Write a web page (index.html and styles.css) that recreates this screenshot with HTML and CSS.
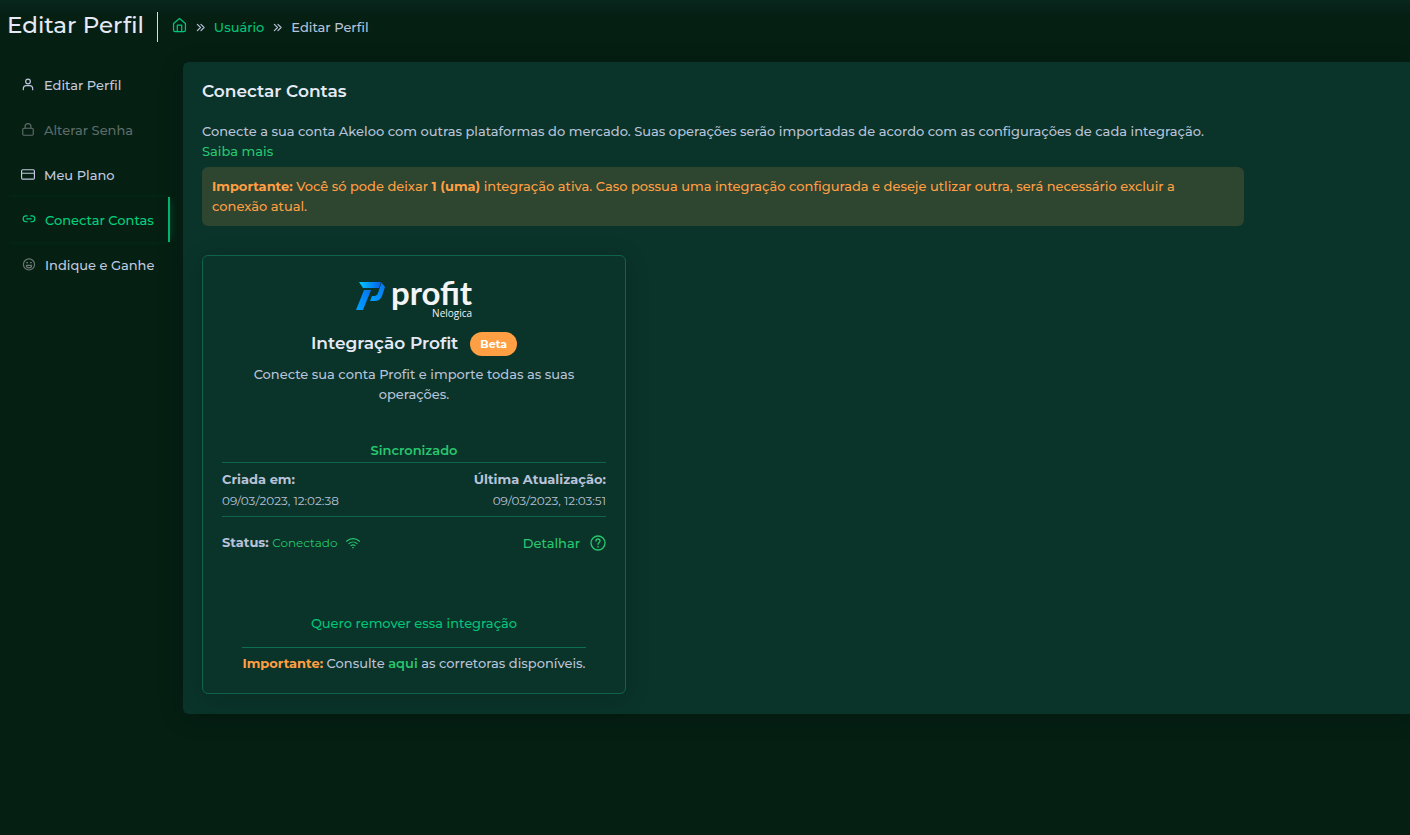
FILE: index.html
```html
<!DOCTYPE html>
<html lang="pt-BR">
<head>
    <meta charset="UTF-8">
    <meta name="viewport" content="width=device-width, initial-scale=1.0">
    <title>Editar Perfil</title>
    <link rel="stylesheet" href="styles.css">
</head>
<body>

<header class="page-header">
    <h1>Editar Perfil</h1>
    <nav class="breadcrumb">
        <a href="#" aria-label="Home">
            <svg class="icon-home" viewBox="0 0 24 24"><path d="M2.5 9.5 12 1.5l9.500 8V20a2.500 2.500 0 0 1-2.500 2.500H5A2.500 2.500 0 0 1 2.500 20z"/><path d="M8.500 22.500V12h7v10.500"/></svg>
        </a>
        <svg class="icon-sep" viewBox="0 0 10 10"><path d="M1.500 1.500 5 5 1.500 8.500M5.500 1.500 9 5 5.500 8.500"/></svg>
        <a href="#">Usuário</a>
        <svg class="icon-sep" viewBox="0 0 10 10"><path d="M1.500 1.500 5 5 1.500 8.500M5.500 1.500 9 5 5.500 8.500"/></svg>
        <span>Editar Perfil</span>
    </nav>
</header>

<div class="layout">
    <nav class="menu">
        <a href="#" class="menu-item">
            <svg viewBox="0 0 24 24"><circle cx="12" cy="6" r="4"/><path d="M4 20v-2a5 5 0 0 1 5-5h6a5 5 0 0 1 5 5v2"/></svg>
            Editar Perfil
        </a>
        <a href="#" class="menu-item disabled">
            <svg viewBox="0 0 24 24"><rect x="3" y="9" width="18" height="12" rx="2"/><path d="M7 9V6a5 5 0 0 1 10 0v3"/></svg>
            Alterar Senha
        </a>
        <a href="#" class="menu-item">
            <svg viewBox="0 0 24 24"><rect x="1" y="3" width="22" height="16" rx="2"/><path d="M1 9h22"/></svg>
            Meu Plano
        </a>
        <a href="#" class="menu-item active">
            <svg viewBox="0 0 24 24"><path d="M9 15H7A5 5 0 0 1 7 5h2M15 5h2a5 5 0 0 1 0 10h-2M8 10h8"/></svg>
            Conectar Contas
        </a>
        <a href="#" class="menu-item wide">
            <svg class="icon-smile" viewBox="0 0 24 24"><circle cx="12" cy="11" r="9.500"/><path d="M7.500 12.500h9a4.500 4.500 0 0 1-9 0zM8 8h1.500M14.500 8H16"/></svg>
            Indique e Ganhe
        </a>
    </nav>

    <main class="panel">
        <h2>Conectar Contas</h2>
        <div class="content">
            <p class="intro">Conecte a sua conta Akeloo com outras plataformas do mercado. Suas operações serão importadas de acordo com as configurações de cada integração.<br><a href="#">Saiba mais</a></p>
            <div class="alert"><b>Importante:</b> Você só pode deixar <b>1 (uma)</b> integração ativa. Caso possua uma integração configurada e deseje utlizar outra, será necessário excluir a conexão atual.</div>

            <section class="card">
                <div class="logo">
                    <svg class="logo-mark" viewBox="0 0 30 30">
                        <defs>
                            <linearGradient id="top" x1="0" y1="0" x2="1" y2="0">
                                <stop offset="0" stop-color="#00c8ff"/>
                                <stop offset="1" stop-color="#075fe8"/>
                            </linearGradient>
                            <linearGradient id="stem" x1="1" y1="0" x2="0" y2="1">
                                <stop offset="0" stop-color="#0873ee"/>
                                <stop offset="1" stop-color="#00a2ff"/>
                            </linearGradient>
                        </defs>
                        <path fill="url(#top)" d="M3 1h22l-2 6H7z"/>
                        <path fill="url(#stem)" d="M25.500 1.500 29 6l-3 9q-2 5-7 5h-5l2-5h3q2 0 3-3z"/>
                        <path fill="url(#stem)" d="M8 9h7L7 29H0z"/>
                    </svg>
                    <div class="logo-text">
                        <span class="logo-name">profit</span>
                        <span class="logo-brand">Nelogica</span>
                    </div>
                </div>
                <div class="card-title">
                    <h3>Integração Profit</h3>
                    <span class="badge">Beta</span>
                </div>
                <p class="description">Conecte sua conta Profit e importe todas as suas operações.</p>

                <div class="sync">Sincronizado</div>
                <div class="dates">
                    <div>
                        <b>Criada em:</b>
                        <small>09/03/2023, 12:02:38</small>
                    </div>
                    <div class="right">
                        <b>Última Atualização:</b>
                        <small>09/03/2023, 12:03:51</small>
                    </div>
                </div>
                <div class="status">
                    <div><b>Status:</b> <small>Conectado</small></div>
                    <svg class="icon-wifi" viewBox="0 0 24 24"><path d="M1 9a16 16 0 0 1 22 0M5 13a10.500 10.500 0 0 1 14 0M8.500 16.500a6 6 0 0 1 7 0M11.500 20h1"/></svg>
                    <a href="#" class="detail">Detalhar
                        <svg class="icon-help" viewBox="0 0 24 24"><circle cx="12" cy="12" r="10.500"/><path d="M9 9a3 3 0 0 1 6 0c0 2-3 2.500-3 5M12 17v1"/></svg>
                    </a>
                </div>

                <button type="button" class="remove">Quero remover essa integração</button>
                <div class="note"><b>Importante:</b> Consulte <a href="#">aqui</a> as corretoras disponíveis.</div>
            </section>
        </div>
    </main>
</div>

</body>
</html>
```
FILE: styles.css
```css
* {
    box-sizing: border-box;
}
body {
    margin: 0;
    min-height: 100vh;
    background: linear-gradient(#09271e, #051f13 16px) no-repeat #051f13;
    color: #b8c2d8;
    font-family: Montserrat, Inter, "Open Sans", sans-serif;
    font-size: 13px;
    font-weight: 500;
    line-height: 20px;
    overflow-x: hidden;
}
h1, h2, h3, p {
    margin: 0;
    font-weight: 500;
    color: #e6eaf6;
}
a {
    color: #28c76f;
    text-decoration: none;
}
b {
    font-weight: 700;
}
small {
    font-size: 12px;
    font-weight: 400;
}
svg {
    flex: none;
    fill: none;
    stroke: currentColor;
    stroke-width: 2;
    stroke-linecap: round;
    stroke-linejoin: round;
}

/* header */
.page-header {
    display: flex;
    align-items: center;
    height: 62px;
    padding: 0 7px 8px;
}
.page-header h1 {
    padding-right: 13px;
    font-size: 23px;
    line-height: 30px;
    padding-bottom: 4px;
}
.breadcrumb {
    display: flex;
    align-items: center;
    gap: 9px;
    height: 30px;
    padding-left: 14px;
    border-left: 1px solid #d6dce8;
}
.breadcrumb a {
    color: #00c57a;
}
.icon-home {
    display: block;
    width: 15px;
    height: 16px;
    margin-bottom: 4px;
}
.icon-sep {
    width: 9px;
    height: 9px;
    stroke-width: 1.3;
}

/* menu */
.layout {
    display: flex;
    align-items: flex-start;
    gap: 13px;
}
.menu {
    flex: none;
    width: 170px;
}
.menu-item {
    display: flex;
    align-items: center;
    gap: 9px;
    height: 45px;
    padding-left: 21px;
    color: #c0c9df;
    font-weight: 500;
}
.menu-item svg {
    width: 14px;
    height: 14px;
}
.menu-item.disabled {
    color: #5c6c69;
}
.menu-item.active, .menu-item.wide {
    padding-left: 22px;
}
.menu-item.active {
    color: #00d17f;
    border-right: 2px solid #00b872;
    box-shadow: 4px 0 8px -4px rgba(0, 184, 114, 0.3);
}
.menu-item .icon-smile {
    color: #6b7772;
}

/* panel */
.panel {
    flex: 1;
    min-width: 0;
    padding: 19px 19px 20px;
    background: #0a3329;
    border-radius: 6px 0 0 6px;
    box-shadow: 0 4px 24px rgba(0, 0, 0, 0.2);
}
.panel h2 {
    font-size: 17px;
    font-weight: 600;
    margin-bottom: 20px;
}
.content {
    max-width: 1042px;
}
.intro {
    color: inherit;
    margin-bottom: 6px;
}
.alert {
    padding: 9px 40px 10px 10px;
    background: #2e4530;
    border-radius: 6px;
    color: #ff9f43;
}

/* card */
.card {
    display: flex;
    flex-direction: column;
    max-width: 424px;
    margin-top: 29px;
    padding: 24px 19px 20px;
    border: 1px solid #0e634a;
    border-radius: 6px;
    box-shadow: 0 4px 24px rgba(0, 0, 0, 0.15);
}
.logo {
    display: flex;
    justify-content: center;
    gap: 5px;
    height: 42px;
}
.logo-mark {
    width: 30px;
    height: 30px;
    margin-top: 1px;
    stroke: none;
}
.logo-text {
    display: flex;
    flex-direction: column;
    align-items: flex-end;
    color: #f3f4f6;
}
.logo-name {
    font-family: Lato, sans-serif;
    font-size: 33px;
    font-weight: 700;
    line-height: 24px;
}
.logo-brand {
    font-family: "Open Sans", sans-serif;
    font-size: 10px;
    line-height: 18px;
}
.card-title {
    display: flex;
    justify-content: center;
    align-items: flex-end;
    gap: 12px;
    height: 34px;
    margin-bottom: 8px;
}
.card-title h3 {
    font-size: 17px;
    font-weight: 600;
    line-height: 26px;
}
.badge {
    padding: 2px 10px;
    border-radius: 12px;
    background: #ff9f43;
    color: #fff;
    font-size: 11px;
    font-weight: 700;
}
.description {
    padding: 0 28px;
    color: inherit;
    text-align: center;
}
.sync {
    margin-top: 36px;
    padding-bottom: 2px;
    color: #28c76f;
    font-weight: 600;
    text-align: center;
}
.dates {
    display: flex;
    justify-content: space-between;
    padding: 6px 0 5px;
    border: solid #0e634a;
    border-width: 1px 0;
}
.dates b, .dates small {
    display: block;
    line-height: 21px;
}
.right {
    text-align: right;
}
.status {
    display: flex;
    align-items: center;
    gap: 9px;
    margin-top: 15px;
}
.status small {
    color: #28c76f;
}
.icon-wifi {
    width: 14px;
    height: 14px;
    color: #28c76f;
}
.detail {
    display: flex;
    align-items: center;
    gap: 10px;
    margin-left: auto;
}
.icon-help {
    width: 16px;
    height: 16px;
}
.remove {
    align-self: center;
    margin-top: 60px;
    padding: 0;
    border: none;
    background: none;
    color: #00c57a;
    font: inherit;
    cursor: pointer;
}
.note {
    align-self: center;
    margin-top: 14px;
    padding-top: 5px;
    border-top: 1px solid #0e7050;
}
.note b {
    color: #ff9f43;
}
.note a {
    font-weight: 600;
}
```
